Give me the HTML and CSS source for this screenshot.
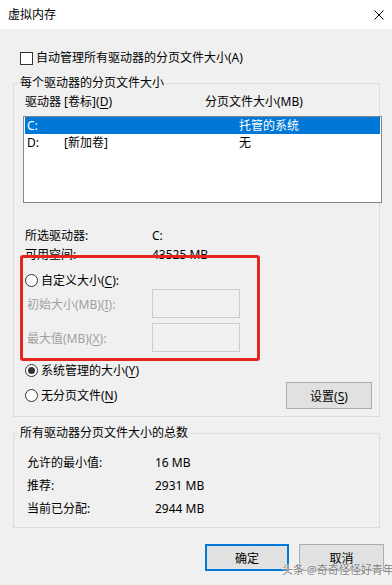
FILE: index.html
```html
<!DOCTYPE html>
<html lang="zh-CN">
<head>
  <meta charset="UTF-8">
  <meta name="viewport" content="width=device-width, initial-scale=1.0">
  <title>虚拟内存</title>
  <link rel="stylesheet" href="styles.css">
</head>
<body>
  <div class="window">
    <div class="titlebar">
      <span class="title">虚拟内存</span>
      <svg class="close" width="10" height="10" viewBox="0 0 10 10">
        <path d="M0.5 0.5 L9.5 9.5 M9.5 0.5 L0.5 9.5" stroke="#000" stroke-width="1" fill="none"/>
      </svg>
    </div>

    <div class="content">
      <div class="check-row"><span class="checkbox"></span>自动管理所有驱动器的分页文件大小(A)</div>

      <fieldset class="group group-drives">
        <legend>每个驱动器的分页文件大小</legend>
        <div class="list-head">
          <span class="head-drive">驱动器 [卷标](<u>D</u>)</span>
          <span>分页文件大小(MB)</span>
        </div>
        <div class="listbox">
          <div class="list-row selected">
            <span class="c-letter">C:</span><span class="c-label"></span><span>托管的系统</span>
          </div>
          <div class="list-row">
            <span class="c-letter">D:</span><span class="c-label">[新加卷]</span><span>无</span>
          </div>
        </div>

        <div class="info-row"><span class="info-key">所选驱动器:</span><span>C:</span></div>
        <div class="info-row"><span class="info-key">可用空间:</span><span>43525 MB</span></div>

        <div class="custom-block">
          <div class="highlight"></div>
          <div class="radio-row"><span class="radio"></span>自定义大小(<u>C</u>):</div>
          <div class="field-row">
            <span class="field-label">初始大小(MB)(<u>I</u>):</span>
            <span class="field-input"></span>
          </div>
          <div class="field-row second">
            <span class="field-label">最大值(MB)(<u>X</u>):</span>
            <span class="field-input"></span>
          </div>
        </div>

        <div class="radio-row system"><span class="radio checked"></span>系统管理的大小(<u>Y</u>)</div>
        <div class="last-row">
          <div class="radio-row"><span class="radio"></span>无分页文件(<u>N</u>)</div>
          <button class="btn btn-set">设置(<u>S</u>)</button>
        </div>
      </fieldset>

      <fieldset class="group group-total">
        <legend>所有驱动器分页文件大小的总数</legend>
        <div class="total-row"><span class="total-key">允许的最小值:</span><span>16 MB</span></div>
        <div class="total-row"><span class="total-key">推荐:</span><span>2931 MB</span></div>
        <div class="total-row"><span class="total-key">当前已分配:</span><span>2944 MB</span></div>
      </fieldset>

      <div class="actions">
        <button class="btn btn-ok">确定</button>
        <button class="btn btn-cancel">取消</button>
      </div>
    </div>

    <div class="watermark">头条 @奇奇怪怪好青年</div>
  </div>
</body>
</html>
```

FILE: styles.css
```css
body {
  margin: 0;
  font-family: "Noto Sans", "Noto Sans CJK SC", sans-serif;
  font-size: 12px;
  color: #000000;
  background-color: #f0f0f0;
}

u {
  text-decoration: underline;
  text-underline-offset: 2px;
}

.window {
  position: relative;
  width: 392px;
  height: 585px;
  overflow: hidden;
  background-color: #f0f0f0;
}

.titlebar {
  height: 29px;
  background-color: #ffffff;
  display: flex;
  align-items: center;
  justify-content: space-between;
  padding: 0 8px 0 8px;
}

.title {
  line-height: 18px;
  margin-top: 1px;
}

.content {
  padding: 0 0 0 13px;
}

.check-row {
  display: flex;
  align-items: center;
  height: 18px;
  line-height: 18px;
  margin-top: 20px;
  padding-left: 7px;
}

.checkbox {
  width: 11px;
  height: 11px;
  border: 1px solid #333333;
  background-color: #ffffff;
  margin-right: 3px;
}

.group {
  margin: 0;
  padding: 0;
  width: 367px;
  min-width: 0;
  box-sizing: border-box;
  border: 1px solid #dcdcdc;
}

.group legend {
  margin-left: 4px;
  padding: 0 2px;
  line-height: 18px;
}

.group-drives {
  margin-top: 7px;
  padding-bottom: 7px;
}

.list-head {
  display: flex;
  height: 18px;
  line-height: 18px;
  margin-top: 1px;
  padding-left: 11px;
}

.head-drive {
  width: 180px;
}

.listbox {
  margin-top: 5px;
  margin-left: 9px;
  width: 359px;
  height: 87px;
  box-sizing: border-box;
  border: 1px solid #828790;
  background-color: #ffffff;
}

.list-row {
  display: flex;
  height: 17px;
  line-height: 17px;
  margin: 0 1px;
  padding-left: 2px;
}

.list-row.selected {
  background-color: #0078d7;
  color: #ffffff;
}

.c-letter {
  width: 37px;
}

.c-label {
  width: 175px;
}

.info-row {
  display: flex;
  height: 19px;
  line-height: 19px;
  padding-left: 11px;
}

.listbox + .info-row {
  margin-top: 23px;
}

.info-key {
  width: 127px;
}

.custom-block {
  position: relative;
  margin-top: 8px;
}

/* red annotation frame drawn over the screenshot */
.highlight {
  position: absolute;
  top: -17px;
  left: 6px;
  width: 240px;
  height: 106px;
  box-sizing: border-box;
  border: 3px solid #e3261f;
  border-radius: 3px;
}

.radio-row {
  display: flex;
  align-items: center;
  height: 17px;
  line-height: 17px;
  padding-left: 11px;
}

.radio {
  position: relative;
  width: 11px;
  height: 11px;
  border: 1px solid #333333;
  border-radius: 50%;
  background-color: #ffffff;
  margin-right: 3px;
}

.radio.checked::after {
  content: "";
  position: absolute;
  left: 2px;
  top: 2px;
  width: 7px;
  height: 7px;
  border-radius: 50%;
  background-color: #333333;
}

.field-row {
  display: flex;
  align-items: center;
  height: 29px;
  padding-left: 13px;
  color: #a0a0a0;
}

.field-row.second {
  margin-top: 5px;
}

.field-label {
  width: 125px;
}

.field-input {
  width: 88px;
  height: 29px;
  box-sizing: border-box;
  border: 1px solid #cccccc;
}

.radio-row.system {
  margin-top: 9px;
  height: 18px;
}

.last-row {
  display: flex;
  align-items: center;
  justify-content: space-between;
  margin-top: 3px;
  padding-right: 7px;
}

.btn {
  font-family: "Noto Sans", "Noto Sans CJK SC", sans-serif;
  font-size: 12px;
  color: #000000;
  background-color: #e1e1e1;
  border: 1px solid #adadad;
  padding: 0;
  box-sizing: border-box;
}

.btn-set {
  width: 86px;
  height: 27px;
}

.group-total {
  margin-top: 7px;
  padding-bottom: 7px;
}

.total-row {
  display: flex;
  height: 23px;
  line-height: 23px;
  padding-left: 13px;
}

.group-total legend + .total-row {
  margin-top: 9px;
}

.total-key {
  width: 128px;
}

.actions {
  display: flex;
  justify-content: flex-end;
  gap: 10px;
  margin-top: 16px;
  padding-right: 8px;
}

.btn-ok {
  width: 84px;
  height: 27px;
  border: 2px solid #0078d7;
}

.btn-cancel {
  width: 85px;
  height: 27px;
}

/* watermark stamped over the bottom-right corner */
.watermark {
  position: absolute;
  left: 282px;
  top: 562px;
  font-size: 11px;
  line-height: 16px;
  white-space: nowrap;
  color: #7d7d7d;
  text-shadow: 0 0 1px #ffffff, 0 0 1px #ffffff;
}
```
